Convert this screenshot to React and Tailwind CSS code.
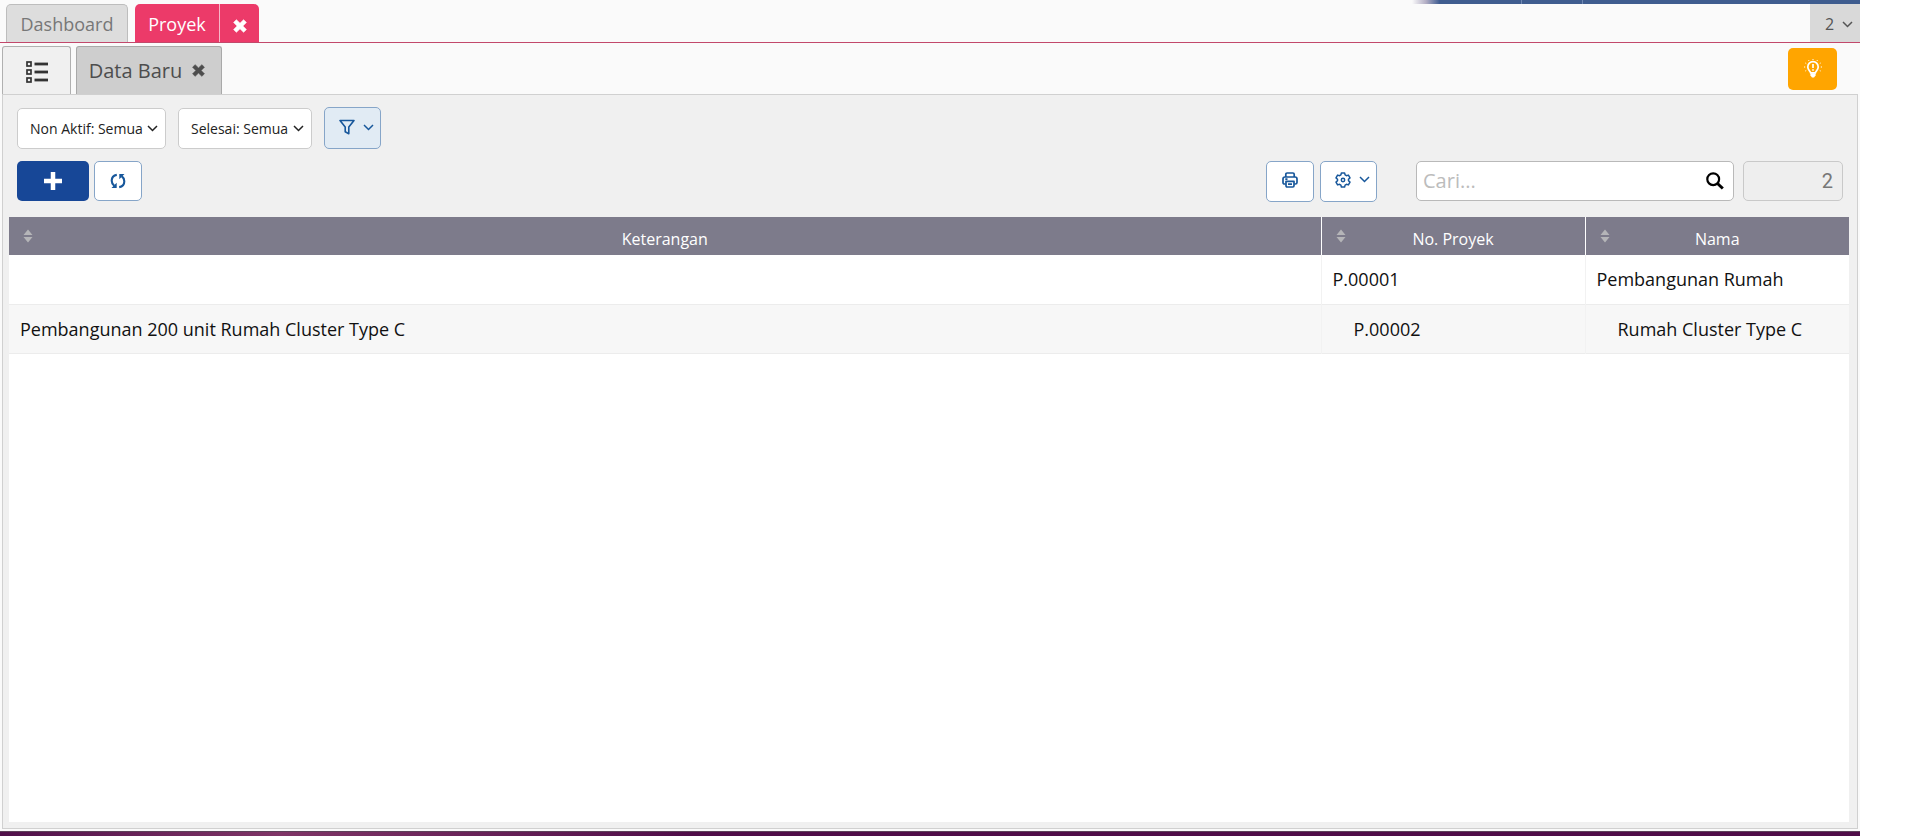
import { useState } from 'react'
import clsx from 'clsx'

const ROWS = [
  { note: '', code: 'P.00001', name: 'Pembangunan Rumah', depth: 0 },
  { note: 'Pembangunan 200 unit Rumah Cluster Type C', code: 'P.00002', name: 'Rumah Cluster Type C', depth: 1 },
]

const OUTLINE_BTN = 'flex items-center justify-center rounded-[5px] border border-[#86a5c8] text-[#17579b]'

/* ── Icons ── */
function Chevron({ className }) {
  return (
    <svg viewBox="0 0 11 7" className={clsx('h-[7px] w-[11px]', className)} fill="none" stroke="currentColor" strokeWidth="1.5">
      <path d="M1 1 5.500 5.500 10 1" />
    </svg>
  )
}

function Cross({ className }) {
  return (
    <svg viewBox="0 0 14 14" className={className} fill="currentColor">
      <path d="M3.4.7 7 4.2 10.600.7 13.400 3.400 9.900 7l3.500 3.600-2.800 2.700L7 9.800l-3.600 3.500L.6 10.600 4.100 7 .6 3.400z" stroke="currentColor" strokeWidth=".6" strokeLinejoin="round" />
    </svg>
  )
}

function ListIcon() {
  return (
    <svg viewBox="0 0 22 22" className="h-[22px] w-[22px]" fill="none" stroke="currentColor">
      {[1, 9, 17].map(y => (
        <g key={y}>
          <rect x="1" y={y} width="4" height="4" strokeWidth="1.700" />
          <path d={`M8.500 ${y + 2}H22`} strokeWidth="2.800" />
        </g>
      ))}
    </svg>
  )
}

function FunnelIcon() {
  return (
    <svg viewBox="0 0 16 16" className="h-4 w-4" fill="none" stroke="currentColor" strokeWidth="1.600" strokeLinejoin="round">
      <path d="M1 1.500h14L9.800 8v6.700l-3.600-1.900V8z" />
    </svg>
  )
}

function RefreshIcon() {
  return (
    <svg viewBox="0 0 16 16" className="h-4 w-4" fill="none" stroke="currentColor" strokeWidth="2.100">
      <path d="M6.800 1.900C3.600 2.400 1.700 5 1.700 7.800c0 2 .9 3.700 2.600 5" />
      <path d="M9.200 14.100c3.200-.5 5.100-3.100 5.100-5.900 0-2-.9-3.700-2.600-5" />
      <path d="M6.700 9.800v5.200H1.500zM9.300 6.200V1h5.200z" fill="currentColor" stroke="none" />
    </svg>
  )
}

function PrinterIcon() {
  return (
    <svg viewBox="0 0 16 16" className="h-4 w-4" fill="none" stroke="currentColor" strokeWidth="1.700" strokeLinejoin="round">
      <path d="M3.800 5V2.300c0-.8.500-1.300 1.300-1.300h5.800c.8 0 1.300.5 1.300 1.300V5" />
      <path d="M3.700 12H2.600C1.600 12 1 11.400 1 10.400V7c0-1.300.8-2 2-2h10c1.200 0 2 .7 2 2v3.400c0 1-.6 1.600-1.600 1.600h-1.100" />
      <path d="M4 9.300h8v4.400c0 .8-.4 1.300-1.200 1.300H5.200c-.8 0-1.200-.5-1.200-1.300zM3.300 7.200h2.200M6 12.200h4" />
    </svg>
  )
}

function GearIcon() {
  return (
    <svg viewBox="0 0 16 16" className="h-4 w-4" fill="none" stroke="currentColor" strokeWidth="1.500" strokeLinejoin="round">
      <path d="M6.400.9h3.200l.5 2 1.300.8 2-.6L15 5.900l-1.500 1.400v1.400L15 10.100l-1.600 2.800-2-.6-1.300.8-.5 2H6.400l-.5-2-1.300-.8-2 .6L1 10.100l1.500-1.400V7.300L1 5.900l1.600-2.800 2 .6 1.300-.8z" />
      <circle cx="8" cy="8" r="1.700" />
    </svg>
  )
}

function SearchIcon() {
  return (
    <svg viewBox="0 0 18 18" className="h-[18px] w-[18px]" fill="none" stroke="currentColor">
      <circle cx="7.200" cy="7.200" r="5.900" strokeWidth="2.200" />
      <path d="m11.500 11.500 5.300 5" strokeWidth="3" />
    </svg>
  )
}

function BulbIcon() {
  return (
    <svg viewBox="0 0 20 20" className="h-5 w-5" fill="none" stroke="currentColor">
      <path d="M7.600 13.800C7 11.800 4.800 10.700 4.800 7.900a5.200 5.200 0 0 1 10.400 0c0 2.800-2.200 3.900-2.800 5.900z" strokeWidth="1.700" />
      <path d="M7.400 14.200h5.200v2.200L11 18.600H9l-1.600-2.200z" fill="currentColor" stroke="none" />
      <path d="M10 5v4M10 10.300v1.500" strokeWidth="1.700" />
      <path d="M10 0v1M5.500 1l.5.900M14.500 1l-.5.900M2.300 4l.9.500M17.700 4l-.9.500M1 8h1.200M19 8h-1.200M2.300 12l.9-.5M17.700 12l-.9-.5" strokeWidth="1" />
    </svg>
  )
}

function SortIcon() {
  return (
    <svg viewBox="0 0 10 14" className="absolute left-[14px] top-3 h-[14px] w-[10px] text-[#b5b5b8]" fill="currentColor">
      <path d="M5 .5 9.500 6h-9zM5 13.500.5 8h9z" />
    </svg>
  )
}

/* ── Controls ── */
function FilterSelect({ label }) {
  return (
    <div className="relative h-[41px]">
      <select
        aria-label={label}
        className="h-full appearance-none rounded-[5px] border border-[#cccccc] bg-white pl-3 pr-[22px] text-sm text-[#222]"
      >
        <option>{label}: Semua</option>
      </select>
      <Chevron className="pointer-events-none absolute right-2 top-[17px] text-[#222]" />
    </div>
  )
}

function HeadCell({ className, children }) {
  return (
    <th className={clsx('relative h-[38px] pt-[6px] text-base font-normal text-white', className)}>
      <SortIcon />
      {children}
    </th>
  )
}

export default function App() {
  const [query, setQuery] = useState('')

  return (
    <div className="flex h-screen flex-col pr-[55px] font-['Open_Sans',sans-serif]">
      <div className="flex min-h-0 flex-1 flex-col bg-[#fafafa]">
        {/* Header edge */}
        <div className="flex h-1 shrink-0 justify-end">
          <div className="flex w-[448px]">
            <div className="w-7 bg-linear-to-r from-[#fafafa] via-[#b3aec4] to-[#3d5a8f]" />
            <div className="w-[82px] border-r border-[#6f88b3] bg-[#3f5d8f]" />
            <div className="w-[61px] border-r border-[#6f88b3] bg-[#3f5d8f]" />
            <div className="flex-1 bg-[#3f5d8f]" />
          </div>
        </div>

        {/* Main tabs */}
        <div className="flex h-[39px] shrink-0 items-stretch border-b border-[#c2486b] pl-[6px]">
          <button className="w-[122px] rounded-t-[5px] border border-b-0 border-[#bdbdbd] bg-[#dddddd] text-lg text-[#777]">
            Dashboard
          </button>
          <div className="ml-[7px] flex rounded-t-[5px] bg-[#ec3a69] text-white">
            <button className="w-[84px] pt-[2px] text-lg">Proyek</button>
            <button aria-label="Tutup Proyek" className="flex w-10 items-center justify-center border-l border-[#f7b6c8] pt-[5px]">
              <Cross className="h-[14px] w-[14px]" />
            </button>
          </div>
          <button className="ml-auto flex w-[50px] items-center justify-center gap-2 bg-[#d9d9d9] pl-2 pt-[2px] text-base text-[#555]">
            2
            <Chevron />
          </button>
        </div>

        {/* Sub tabs */}
        <div className="flex h-[51px] shrink-0 items-end px-[2px]">
          <button aria-label="Daftar" className="flex h-12 w-[69px] items-center justify-center rounded-t-[3px] border border-b-0 border-[#b0b0b0] bg-[#f0f0f0] pt-[2px] text-[#333]">
            <ListIcon />
          </button>
          <div className="ml-[5px] flex h-12 w-[146px] items-center justify-center gap-[10px] rounded-t-[3px] border border-b-0 border-[#a9a9a9] bg-[#cecece] pr-1 text-[#4d4d4d]">
            <button className="text-xl">Data Baru</button>
            <button aria-label="Tutup Data Baru">
              <Cross className="h-[13px] w-[13px]" />
            </button>
          </div>
          <button aria-label="Petunjuk" className="mb-1 ml-auto mr-[21px] flex h-[42px] w-[49px] items-center justify-center rounded-[5px] bg-[#ffa500] text-white">
            <BulbIcon />
          </button>
        </div>

        {/* Panel */}
        <main className="mx-[2px] mb-[2px] flex min-h-0 flex-1 flex-col border border-[#d0d0d0] bg-[#f0f0f0] px-[6px] pb-[6px] pt-3">
          <div className="flex items-end gap-3 px-2">
            <FilterSelect label="Non Aktif" />
            <FilterSelect label="Selesai" />
            <button aria-label="Filter" className={clsx(OUTLINE_BTN, 'h-[42px] w-[57px] gap-2 bg-[#e1ebf4] pb-[2px] pl-2')}>
              <FunnelIcon />
              <Chevron />
            </button>
          </div>

          <div className="mt-3 flex items-start px-2">
            <button aria-label="Tambah" className="flex h-10 w-[72px] items-center justify-center rounded-[5px] bg-[#174797] text-white">
              <svg viewBox="0 0 18 18" className="h-[18px] w-[18px]" fill="none" stroke="currentColor" strokeWidth="4.500">
                <path d="M9 0v18M0 9h18" />
              </svg>
            </button>
            <button aria-label="Muat ulang" className={clsx(OUTLINE_BTN, 'ml-[5px] h-10 w-12 bg-white')}>
              <RefreshIcon />
            </button>

            <button aria-label="Cetak" className={clsx(OUTLINE_BTN, 'ml-auto h-[41px] w-12 bg-white pb-1')}>
              <PrinterIcon />
            </button>
            <button aria-label="Pengaturan" className={clsx(OUTLINE_BTN, 'ml-[6px] h-[41px] w-[57px] gap-2 bg-white pb-1 pl-2')}>
              <GearIcon />
              <Chevron />
            </button>
            <div className="ml-[39px] flex h-10 w-[318px] items-center rounded-[5px] border border-[#b9b9b9] bg-white pl-[6px] pr-[9px]">
              <input
                type="text"
                aria-label="Cari"
                placeholder="Cari..."
                value={query}
                onChange={e => setQuery(e.target.value)}
                className="min-w-0 flex-1 text-xl text-[#333] outline-none placeholder:text-[#bcbcbc]"
              />
              <SearchIcon />
            </div>
            <input
              type="text"
              aria-label="Jumlah data"
              readOnly
              value="2"
              className="ml-[9px] h-10 w-[100px] rounded-[5px] border border-[#c9c9c9] bg-[#eeeeee] px-[9px] text-right font-[Roboto,sans-serif] text-xl text-[#777] outline-none"
            />
          </div>

          <div className="mt-[15px] mr-[2px] min-h-0 flex-1 bg-white">
            <table className="w-full table-fixed border-collapse">
              <thead className="bg-[#7d7b8b]">
                <tr>
                  <HeadCell>Keterangan</HeadCell>
                  <HeadCell className="w-[264px] border-l border-white">No. Proyek</HeadCell>
                  <HeadCell className="w-[264px] border-l border-white">Nama</HeadCell>
                </tr>
              </thead>
              <tbody className="text-lg text-[#111]">
                {ROWS.map(({ note, code, name, depth }) => (
                  <tr key={code} className="h-[49px] border-b border-[#ececec] even:bg-[#f7f7f7]">
                    <td className="px-[11px]">{note}</td>
                    <td className={clsx('border-l border-[#f2f2f2]', depth ? 'pl-8' : 'pl-[11px]')}>{code}</td>
                    <td className={clsx('border-l border-[#f2f2f2]', depth ? 'pl-8' : 'pl-[11px]')}>{name}</td>
                  </tr>
                ))}
              </tbody>
            </table>
          </div>
        </main>
      </div>

      {/* Footer strip */}
      <div className="h-[5px] shrink-0 border-t border-[#5e4159] bg-linear-to-r from-[#50104a] via-[#803567] via-15% to-[#500d49] to-37%" />
    </div>
  )
}
